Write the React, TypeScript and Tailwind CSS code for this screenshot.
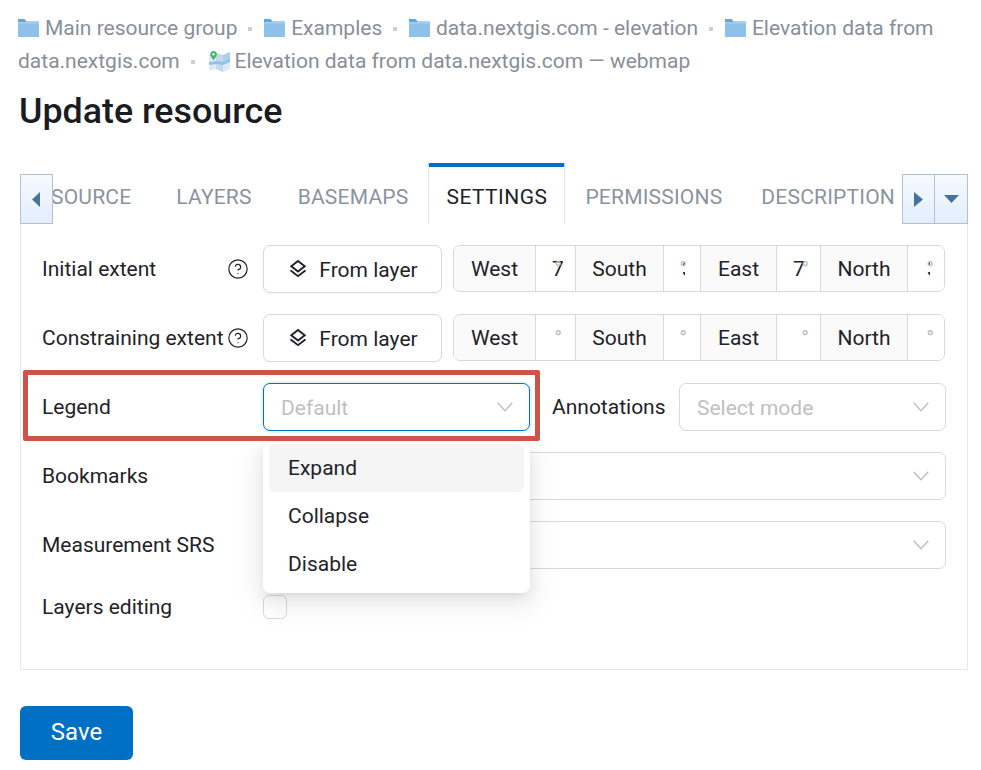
import type { ReactNode } from "react";
import { CircleHelp } from "lucide-react";

type Crumb = {
  label: string;
  map?: boolean;
};

const CRUMBS: Crumb[] = [
  { label: "Main resource group" },
  { label: "Examples" },
  { label: "data.nextgis.com - elevation" },
  { label: "Elevation data from data.nextgis.com" },
  { label: "Elevation data from data.nextgis.com — webmap", map: true },
];

function FolderIcon() {
  return (
    <svg width="21" height="18" viewBox="0 0 21 18" className="mr-[6px] inline-block align-[-2px]">
      <path d="M0 0h6.500l2 2.500H21V5H0z" fill="#5aa9e2" />
      <path d="M0 4h21v14H0z" fill="#8dc1ea" />
      <path d="M0 3.400h21v.8H0z" fill="#d5e8f7" />
    </svg>
  );
}

function MapIcon() {
  return (
    <svg width="21" height="21" viewBox="0 0 21 21" className="ml-[2px] mr-[5px] inline-block align-[-4px]">
      <path d="M0 4l7-2 7 2 7-3v17l-7 3-7-3-7 2z" fill="#dcebf6" />
      <path d="M7 2l7 2v17l-7-3z" fill="#c3d9ea" />
      <path d="M0 11l8-1 6 1 7-4v4l-7 3-6-1-8 1z" fill="#8dc1ea" />
      <path d="M14 4l7-3v6l-7 4z" fill="#a9cfee" />
      <path d="M4.500 0C2.600 0 1.200 1.400 1.200 3.200 1.200 5.400 4.500 9 4.500 9s3.300-3.600 3.300-5.800C7.800 1.400 6.400 0 4.500 0z" fill="#3fb56b" />
      <circle cx="4.500" cy="3.200" r="1.200" fill="#ffffff" />
    </svg>
  );
}

function Breadcrumbs() {
  return (
    <div className="px-[18px] pt-[12px] text-[21px] leading-[33px] text-[#878f9a]">
      {CRUMBS.map((c, i) => (
        <span key={c.label}>
          {c.map ? <MapIcon /> : <FolderIcon />}
          {c.label}
          {i < CRUMBS.length - 1 ? (
            <>
              <span className="ml-[11px] mr-[6.500px] inline-block size-[4px] bg-[#cfcfcf] align-[4px]" />{" "}
            </>
          ) : null}
        </span>
      ))}
    </div>
  );
}

function ScrollButton({ children, className = "" }: { children: ReactNode; className?: string }) {
  return (
    <button
      type="button"
      className={`flex h-[50px] w-[33px] shrink-0 items-center justify-center border border-[#b4c1d5] bg-linear-to-b from-[#f6fafe] to-[#e2eefb] ${className}`}
    >
      {children}
    </button>
  );
}

function Tabs() {
  return (
    <div className="flex h-[61px] items-end">
      <ScrollButton>
        <svg width="9" height="15" viewBox="0 0 9 15">
          <path d="M8 0v15L0 7.500z" fill="#4a7497" />
        </svg>
      </ScrollButton>
      <div className="flex h-full min-w-0 flex-1 overflow-hidden text-[21px] tracking-[0.2px] text-[#8a949f]">
        <div className="-ml-[2px] flex items-center pr-[22px] pt-[8px]">SOURCE</div>
        <div className="flex items-center px-[23px] pt-[8px]">LAYERS</div>
        <div className="flex items-center pl-[23px] pr-[20px] pt-[8px]">BASEMAPS</div>
        <div className="flex w-[137px] shrink-0 items-center justify-center rounded-t-[2px] border-x border-t-4 border-x-[#e8e8e8] border-t-[#0070c5] pt-[4px] tracking-[0.45px] text-[#1f2328]">
          SETTINGS
        </div>
        <div className="flex items-center pl-[20px] pr-[19px] pt-[8px]">PERMISSIONS</div>
        <div className="flex items-center px-[20px] pt-[8px]">DESCRIPTION</div>
      </div>
      <ScrollButton>
        <svg width="9" height="15" viewBox="0 0 9 15">
          <path d="M0 0v15l9-7.500z" fill="#4a7497" />
        </svg>
      </ScrollButton>
      <ScrollButton className="-ml-px w-[34px]">
        <svg width="15" height="8" viewBox="0 0 15 8">
          <path d="M0 0h15L7.500 8z" fill="#4a7497" />
        </svg>
      </ScrollButton>
    </div>
  );
}

function Chevron() {
  return (
    <svg width="16" height="10" viewBox="0 0 16 10" fill="none" className="shrink-0">
      <path d="M.7.800 8 8.800 15.300.800" stroke="#bdbdbd" strokeWidth="1.300" />
    </svg>
  );
}

function LayersIcon() {
  return (
    <svg width="22" height="22" viewBox="0 0 24 24" fill="#1f2328">
      <path d="M11.990 18.540l-7.370-5.730L3 14.070l9 7 9-7-1.630-1.270-7.380 5.740zM12 16l7.360-5.730L21 9l-9-7-9 7 1.630 1.270L12 16zm0-11.470L17.740 9 12 13.470 6.260 9 12 4.530z" />
    </svg>
  );
}

function Select({ placeholder, focused, className = "" }: { placeholder?: string; focused?: boolean; className?: string }) {
  return (
    <div
      className={`flex h-[48px] items-center justify-between rounded-[7px] border bg-white pl-[17px] pr-[16px] text-[#bfbfbf] ${
        focused ? "border-[#0070c5] shadow-[0_0_0_2px_rgba(5,145,255,0.1)]" : "border-[#d9d9d9]"
      } ${className}`}
    >
      <span className="pt-[4px]">{placeholder}</span>
      <Chevron />
    </div>
  );
}

type Cell = { name: string; addon: string; input: string; value: string; pad: string; clip: string; ring: string };

function ExtentGroup({ filled }: { filled: boolean }) {
  const cells: Cell[] = [
    { name: "West", addon: "w-[82px]", input: "w-[40px]", value: "7", pad: "pl-[16px]", clip: "w-[11px]", ring: "right-[13px]" },
    { name: "South", addon: "w-[88px]", input: "w-[37px]", value: "3", pad: "pl-[18px]", clip: "w-[3px]", ring: "right-[13px]" },
    { name: "East", addon: "w-[76px]", input: "w-[44px]", value: "7", pad: "pl-[16px]", clip: "w-[11px]", ring: "right-[11px]" },
    { name: "North", addon: "w-[87px]", input: "w-[38px]", value: "3", pad: "pl-[19px]", clip: "w-[3px]", ring: "right-[12px]" },
  ];
  return (
    <div className="flex h-[47px] w-[492px] overflow-hidden rounded-[7px] border border-[#d9d9d9]">
      {cells.map((c, i) => (
        <div key={c.name} className="flex">
          <div className={`flex items-center justify-center border-r border-[#d9d9d9] bg-[#fafafa] pt-[2px] ${c.addon}`}>{c.name}</div>
          <div className={`relative flex items-center bg-white pt-[2px] ${c.pad} ${c.input} ${i < 3 ? "border-r border-[#d9d9d9]" : ""}`}>
            {filled ? <span className={`block overflow-hidden ${c.clip}`}>{c.value}</span> : null}
            <span className={`absolute top-[1px] text-[21px] leading-[45px] text-[#bdbdbd] ${c.ring}`}>°</span>
          </div>
        </div>
      ))}
    </div>
  );
}

function ExtentRow({ label, filled }: { label: string; filled: boolean }) {
  return (
    <div className="flex h-[48px] items-start">
      <div className="flex h-[48px] w-[221px] items-center justify-between pr-[14px]">
        <span className="pt-[2px]">{label}</span>
        <CircleHelp size={22} strokeWidth={1.300} />
      </div>
      <button
        type="button"
        className="flex h-[48px] w-[179px] items-center justify-center gap-[10px] rounded-[7px] border border-[#d9d9d9] bg-white shadow-[0_2px_0_rgba(0,0,0,0.02)]"
      >
        <LayersIcon />
        <span className="pt-[4px]">From layer</span>
      </button>
      <div className="ml-[11px]">
        <ExtentGroup filled={filled} />
      </div>
    </div>
  );
}

function LegendMenu() {
  return (
    <div className="absolute left-0 top-[60px] z-10 flex h-[150px] w-[267px] flex-col rounded-[7px] bg-white px-[6px] pb-[6px] pt-px shadow-[0_6px_16px_0_rgba(0,0,0,0.08),0_3px_6px_-4px_rgba(0,0,0,0.12),0_9px_28px_8px_rgba(0,0,0,0.05)]">
      <div className="flex h-[48px] items-center rounded-[6px] bg-[#f5f5f5] px-[19px] pt-[2px]">Expand</div>
      <div className="flex h-[48px] items-center px-[19px] pt-[2px]">Collapse</div>
      <div className="flex h-[48px] items-center px-[19px] pt-[4px]">Disable</div>
    </div>
  );
}

export default function App() {
  return (
    <div className="min-h-[770px] bg-white font-['Roboto',sans-serif] text-[21px] text-[#1f2328]">
      <Breadcrumbs />
      <h1 className="mx-[19px] mt-[11px] text-[35.800px] font-medium leading-[44px] text-[#1a1c1f]">Update resource</h1>
      <div className="ml-[20px] mr-[13px] mt-[30px]">
        <Tabs />
        <div className="flex h-[446px] flex-col gap-[21px] border-x border-b border-[#e8e8e8] px-[21px] pt-[21px]">
          <ExtentRow label="Initial extent" filled />
          <ExtentRow label="Constraining extent" filled={false} />
          <div className="relative flex h-[48px] items-center">
            <div className="w-[221px] pt-[2px]">Legend</div>
            <div className="relative w-[267px]">
              <Select placeholder="Default" focused />
              <LegendMenu />
            </div>
            <div className="ml-[22px] w-[127px] pt-[2px]">Annotations</div>
            <Select placeholder="Select mode" className="w-[267px]" />
            <div className="pointer-events-none absolute -left-[19px] -top-[13px] z-20 h-[71px] w-[517px] rounded-[2px] border-[5px] border-[#cf5349]" />
          </div>
          <div className="flex h-[48px] items-center">
            <div className="w-[221px] pt-[2px]">Bookmarks</div>
            <Select className="w-[683px]" />
          </div>
          <div className="flex h-[48px] items-center">
            <div className="w-[221px] pt-[2px]">Measurement SRS</div>
            <Select className="w-[683px]" />
          </div>
          <div className="mt-[5px] flex h-[24px] items-center">
            <div className="w-[221px] pt-[2px]">Layers editing</div>
            <div className="size-[24px] rounded-[6px] border border-[#d9d9d9] bg-white" />
          </div>
        </div>
      </div>
      <button
        type="button"
        className="ml-[20px] mt-[36px] h-[54px] w-[113px] rounded-[6px] bg-[#0070c5] pb-[3px] text-[24px] text-white"
      >
        Save
      </button>
    </div>
  );
}
